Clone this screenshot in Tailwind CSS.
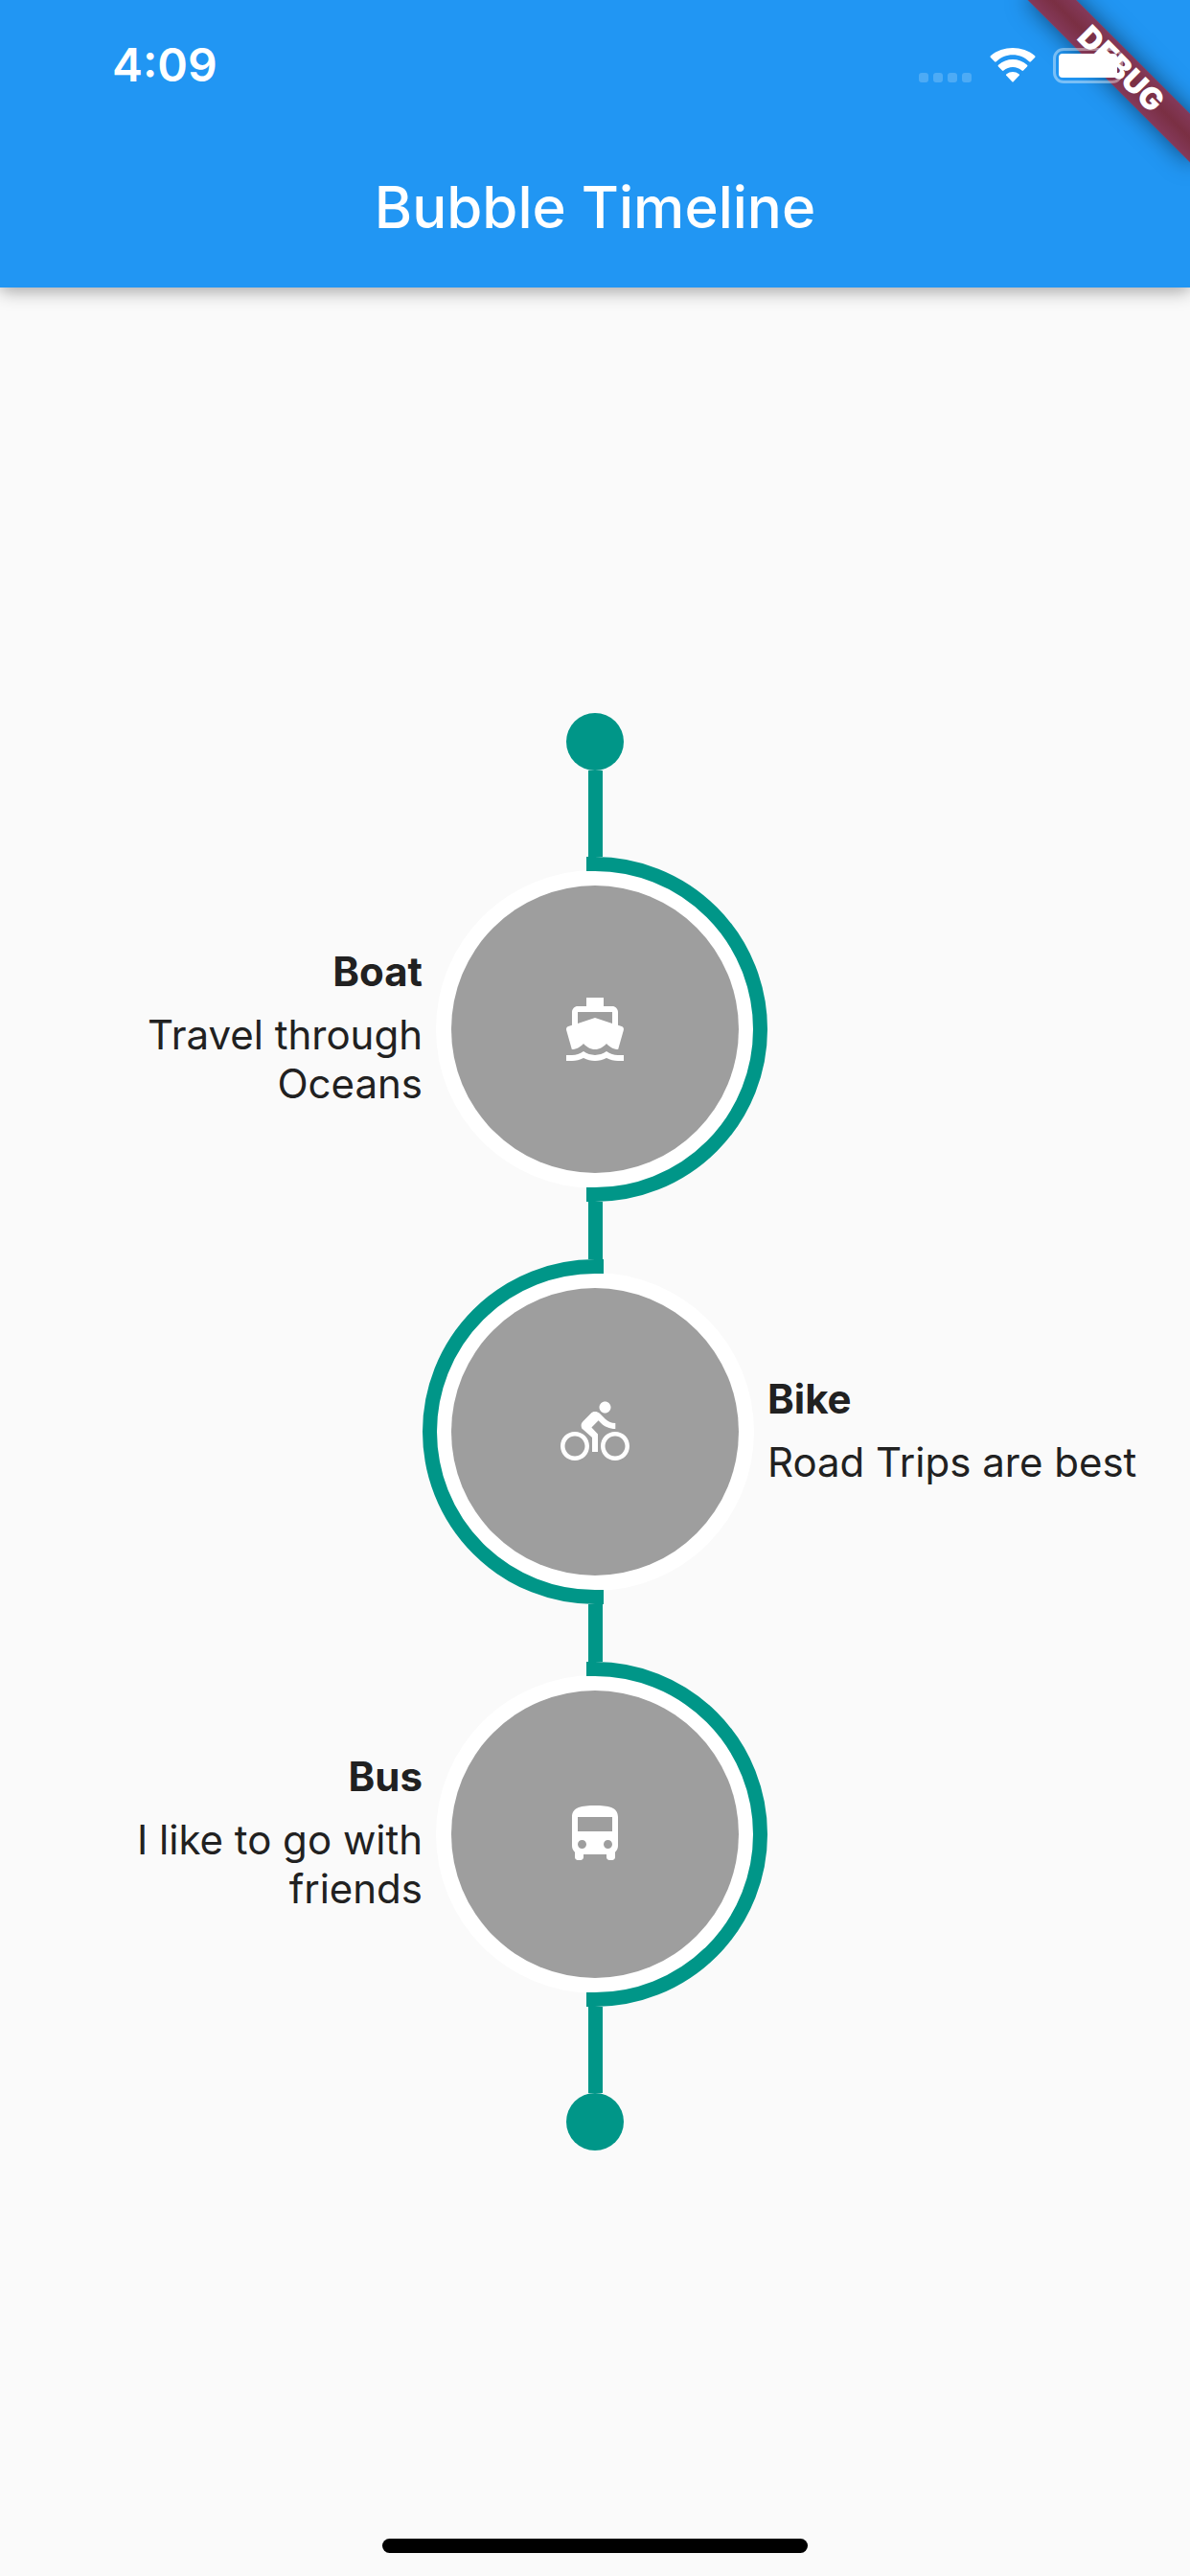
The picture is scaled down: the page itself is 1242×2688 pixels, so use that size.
<!DOCTYPE html>
<html lang="en">
<head>
<meta charset="utf-8">
<meta name="viewport" content="width=device-width, initial-scale=1">
<title>Bubble Timeline</title>
<script src="https://cdn.jsdelivr.net/npm/@tailwindcss/browser@4"></script>
</head>
<body class="relative flex min-h-screen flex-col bg-[#fafafa] font-['Inter',sans-serif] text-[#212121]">

<header class="relative bg-[#2196f3] text-white shadow-[0_3px_18px_rgba(0,0,0,0.38)]">
  <!-- Debug ribbon across the top right corner -->
  <div class="absolute inset-0 overflow-hidden">
    <div class="absolute top-[54px] -right-12 flex h-9 w-60 rotate-45 items-center justify-center bg-linear-to-b from-[#84395a] via-[#7a2f43] to-[#84395a] text-[32px] leading-9 font-black shadow-[0_0_24px_rgba(0,0,0,0.5)]">DEBUG</div>
  </div>

  <!-- Status bar -->
  <div class="relative flex h-[132px] items-center justify-between pt-1 pr-16 pl-[117px]">
    <time class="text-[48px] leading-[60px] font-semibold">4:09</time>
    <div class="flex items-center">
      <svg class="h-9 w-14" viewBox="0 0 56 36" fill="#fff" fill-opacity=".2" aria-hidden="true">
        <rect x="0" y="26" width="10" height="10" rx="3"/><rect x="15" y="26" width="10" height="10" rx="3"/><rect x="30" y="26" width="10" height="10" rx="3"/><rect x="45" y="26" width="10" height="10" rx="3"/>
      </svg>
      <svg class="ml-[18px] h-9 w-12" viewBox="0 0 48 36" fill="#fff" aria-hidden="true">
        <path d="M24 7.3c6.500 0 12.600 2.500 17.200 7a1.200 1.200 0 0 0 1.700 0l4.200-4.300a1.300 1.300 0 0 0 0-1.800C34.200-2.700 13.800-2.700.9 8.200a1.300 1.300 0 0 0 0 1.800l4.200 4.300a1.200 1.200 0 0 0 1.700 0C11.400 9.800 17.500 7.300 24 7.300z"/>
        <path d="M24 20c3.500 0 6.800 1.300 9.400 3.600a1.200 1.200 0 0 0 1.700 0l3.900-4a1.200 1.200 0 0 0 0-1.800c-8.500-7.700-21.500-7.700-30 0a1.200 1.200 0 0 0 0 1.800l3.900 4a1.200 1.200 0 0 0 1.700 0C17.200 21.300 20.500 20 24 20z"/>
        <path d="M30.500 29.100a1.200 1.200 0 0 0 0-1.800 10.300 10.300 0 0 0-13 0 1.200 1.200 0 0 0 0 1.800l5.600 6a1.200 1.200 0 0 0 1.800 0z"/>
      </svg>
      <svg class="ml-[18px] h-[37px] w-[79px]" viewBox="0 0 79 37" aria-hidden="true">
        <rect x="1.500" y="1.500" width="70" height="34" rx="9.500" fill="none" stroke="#fff" stroke-opacity=".4" stroke-width="3"/>
        <rect x="6" y="6" width="61" height="25" rx="4" fill="#fff"/>
        <path d="M75 12.500c2.300 1 4 3.300 4 6s-1.700 5-4 6z" fill="#fff" fill-opacity=".4"/>
      </svg>
    </div>
  </div>

  <!-- App bar -->
  <div class="relative flex h-[168px] items-center justify-center">
    <h1 class="text-[60px] leading-[72px] font-medium">Bubble Timeline</h1>
  </div>
</header>

<main class="flex flex-1 flex-col items-center justify-center">
  <div class="size-[60px] rounded-full bg-[#009688]"></div>
  <div class="h-[90px] w-[15px] bg-[#009688]"></div>

  <section class="grid w-full grid-cols-[1fr_360px_1fr] items-center">
    <div class="flex flex-col gap-[15px] pb-1 pl-12 text-right text-[42px] leading-[51px]">
      <h2 class="font-bold">Boat</h2>
      <p>Travel through Oceans</p>
    </div>
    <svg class="col-start-2 size-[360px]" viewBox="0 0 360 360" role="img" aria-label="Boat">
      <circle cx="180" cy="180" r="166" fill="#fff"/>
      <path d="M171 7.500h9a172.500 172.500 0 0 1 0 345h-9" fill="none" stroke="#009688" stroke-width="15"/>
      <circle cx="180" cy="180" r="150" fill="#9e9e9e"/>
      <path transform="translate(144 144) scale(3)" fill="#fff" d="M20 21c-1.390 0-2.780-.47-4-1.320-2.440 1.710-5.560 1.710-8 0C6.780 20.530 5.390 21 4 21H2v2h2c1.380 0 2.740-.35 4-.99 2.520 1.290 5.480 1.290 8 0 1.260.65 2.620.99 4 .99h2v-2h-2zM3.950 19H4c1.600 0 3.020-.88 4-2 .98 1.120 2.400 2 4 2s3.020-.88 4-2c.98 1.120 2.400 2 4 2h.05l1.890-6.680c.08-.26.060-.54-.060-.780s-.34-.42-.6-.5L20 10.620V6c0-1.100-.9-2-2-2h-3V1H9v3H6c-1.100 0-2 .9-2 2v4.620l-1.290.42c-.26.080-.48.260-.6.500s-.15.520-.060.780L3.950 19zM6 6h12v3.970L12 8 6 9.970V6z"/>
    </svg>
  </section>

  <div class="h-[60px] w-[15px] bg-[#009688]"></div>

  <section class="grid w-full grid-cols-[1fr_360px_1fr] items-center">
    <svg class="col-start-2 size-[360px]" viewBox="0 0 360 360" role="img" aria-label="Bike">
      <circle cx="180" cy="180" r="166" fill="#fff"/>
      <path d="M189 7.500h-9a172.500 172.500 0 0 0 0 345h9" fill="none" stroke="#009688" stroke-width="15"/>
      <circle cx="180" cy="180" r="150" fill="#9e9e9e"/>
      <path transform="translate(144 144) scale(3)" fill="#fff" d="M15.500 5.500c1.100 0 2-.9 2-2s-.9-2-2-2-2 .9-2 2 .9 2 2 2zM5 12c-2.800 0-5 2.200-5 5s2.200 5 5 5 5-2.200 5-5-2.200-5-5-5zm0 8.500c-1.900 0-3.500-1.600-3.500-3.500s1.600-3.500 3.500-3.500 3.500 1.600 3.500 3.500-1.600 3.500-3.500 3.500zm5.800-10l2.400-2.400.8.800c1.300 1.300 3 2.100 5.100 2.100V9c-1.500 0-2.700-.6-3.600-1.500l-1.900-1.900c-.5-.4-1-.6-1.600-.6s-1.100.2-1.400.6L7.800 8.400c-.4.400-.6.900-.6 1.400 0 .6.200 1.100.6 1.400L11 14v5h2v-6.200l-2.200-2.300zM19 12c-2.800 0-5 2.200-5 5s2.200 5 5 5 5-2.200 5-5-2.200-5-5-5zm0 8.500c-1.900 0-3.500-1.600-3.500-3.500s1.600-3.500 3.500-3.500 3.500 1.600 3.500 3.500-1.600 3.500-3.500 3.500z"/>
    </svg>
    <div class="flex flex-col gap-[15px] pr-12 pb-1 text-left text-[42px] leading-[51px]">
      <h2 class="font-bold">Bike</h2>
      <p>Road Trips are best</p>
    </div>
  </section>

  <div class="h-[60px] w-[15px] bg-[#009688]"></div>

  <section class="grid w-full grid-cols-[1fr_360px_1fr] items-center">
    <div class="flex flex-col gap-[15px] pb-1 pl-12 text-right text-[42px] leading-[51px]">
      <h2 class="font-bold">Bus</h2>
      <p>I like to go with friends</p>
    </div>
    <svg class="col-start-2 size-[360px]" viewBox="0 0 360 360" role="img" aria-label="Bus">
      <circle cx="180" cy="180" r="166" fill="#fff"/>
      <path d="M171 7.500h9a172.500 172.500 0 0 1 0 345h-9" fill="none" stroke="#009688" stroke-width="15"/>
      <circle cx="180" cy="180" r="150" fill="#9e9e9e"/>
      <path transform="translate(144 144) scale(3)" fill="#fff" d="M4 16c0 .88.390 1.670 1 2.220V20c0 .55.450 1 1 1h1c.55 0 1-.45 1-1v-1h8v1c0 .55.450 1 1 1h1c.55 0 1-.45 1-1v-1.780c.61-.55 1-1.340 1-2.220V6c0-3.500-3.580-4-8-4s-8 .5-8 4v10zm3.500 1c-.83 0-1.500-.67-1.500-1.500S6.670 14 7.500 14s1.500.67 1.500 1.500S8.330 17 7.500 17zm9 0c-.83 0-1.500-.67-1.500-1.500s.67-1.500 1.500-1.500 1.500.67 1.500 1.500-.67 1.500-1.500 1.500zm1.500-6H6V6h12v5z"/>
    </svg>
  </section>

  <div class="h-[90px] w-[15px] bg-[#009688]"></div>
  <div class="size-[60px] rounded-full bg-[#009688]"></div>
</main>

<!-- Home indicator -->
<div class="absolute inset-x-0 bottom-6 flex justify-center">
  <div class="h-[15px] w-[444px] rounded-full bg-black"></div>
</div>

</body>
</html>
